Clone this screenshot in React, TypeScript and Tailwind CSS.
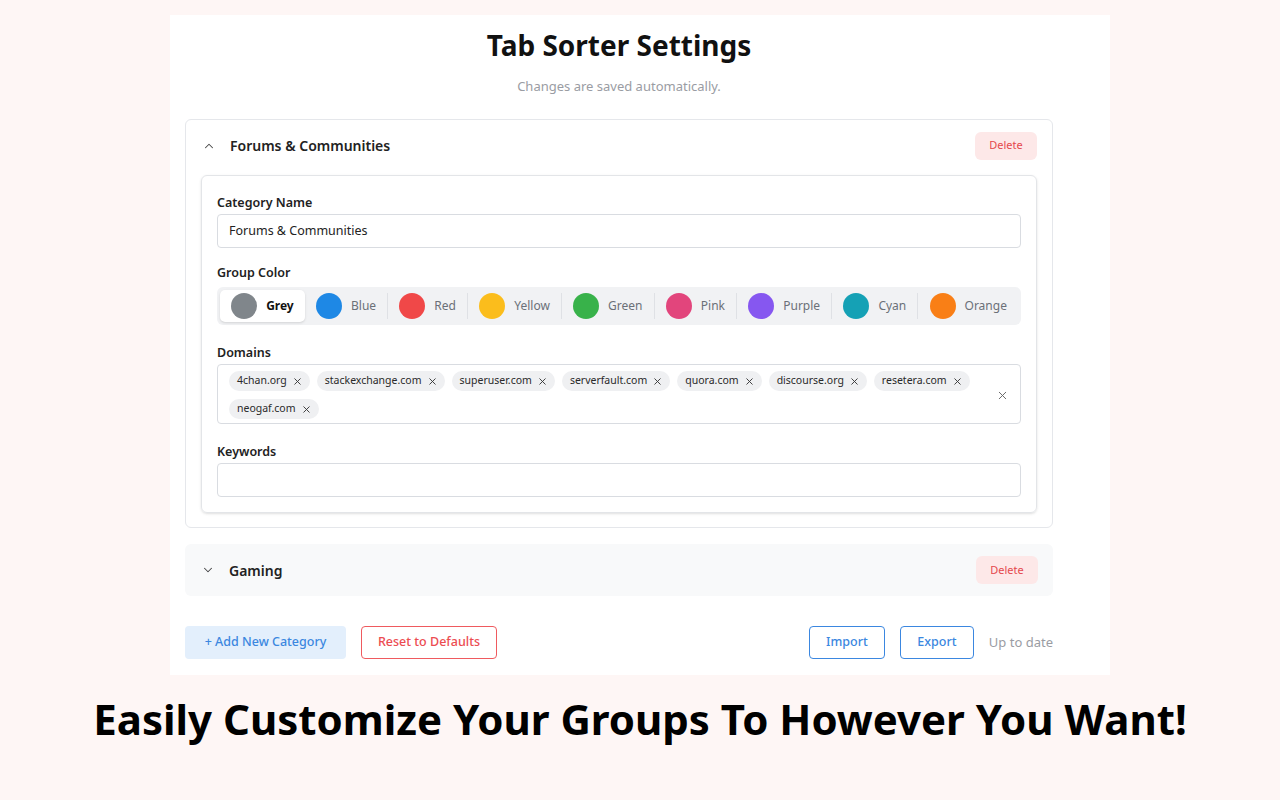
import { ChevronUp, ChevronDown, X } from "lucide-react";

const colors = [
  { name: "Grey", hex: "#80868b" },
  { name: "Blue", hex: "#1e88e5" },
  { name: "Red", hex: "#f04848" },
  { name: "Yellow", hex: "#fbbd1c" },
  { name: "Green", hex: "#38b24a" },
  { name: "Pink", hex: "#e2457c" },
  { name: "Purple", hex: "#8657f0" },
  { name: "Cyan", hex: "#15a1b5" },
  { name: "Orange", hex: "#f97f16" },
];

const domains = [
  "4chan.org",
  "stackexchange.com",
  "superuser.com",
  "serverfault.com",
  "quora.com",
  "discourse.org",
  "resetera.com",
  "neogaf.com",
];

function Label({ children }: { children: React.ReactNode }) {
  return (
    <div className="text-[12.5px] font-semibold text-[#222] leading-[13px] mb-[5px]">
      {children}
    </div>
  );
}

export default function App() {
  const selected = "Grey";

  return (
    <div
      className="w-[1280px] h-[800px] bg-[#fef6f5] flex flex-col items-center pt-[15px] overflow-hidden"
      style={{ fontFamily: '"Noto Sans", "Open Sans", sans-serif' }}
    >
      {/* Settings card */}
      <div className="w-[940px] h-[660px] bg-white pl-[15px] pr-[57px] pt-[13px]">
        <h1 className="text-[28px] font-bold text-[#111] text-center leading-[34px]">
          Tab Sorter Settings
        </h1>
        <p className="text-[13px] text-[#9a9ca3] text-center mt-[15px] leading-[18px]">
          Changes are saved automatically.
        </p>

        {/* Forums & Communities */}
        <div className="mt-[24px] border border-[#e5e7eb] rounded-md px-[15px] pb-[14px]">
          <div className="flex items-center justify-between h-[51px] mb-[4px]">
            <div className="flex items-center gap-[14px] pl-[1px]">
              <ChevronUp className="w-[14px] h-[14px] text-[#444]" strokeWidth={1.75} />
              <span className="text-[14px] font-semibold text-[#222]">
                Forums &amp; Communities
              </span>
            </div>
            <button className="h-[28px] w-[62px] rounded-md bg-[#fde8e8] text-[#e5484d] text-[11px]">
              Delete
            </button>
          </div>

          <div className="border border-[#e3e5e8] rounded-md shadow-sm px-[15px] pt-[20px] pb-[15px]">
            <Label>Category Name</Label>
            <div className="h-[34px] border border-[#d9dce1] rounded-[4px] flex items-center px-[11px] text-[12.5px] text-[#222]">
              Forums &amp; Communities
            </div>

            <div className="mt-[18px]">
              <Label>Group Color</Label>
              <div className="mt-[8px] flex items-center bg-[#f1f2f4] rounded-md p-[3px] h-[38px]">
                {colors.map((c, i) => {
                  const active = c.name === selected;
                  const prevActive = i > 0 && colors[i - 1].name === selected;
                  return (
                    <div key={c.name} className="flex flex-auto items-center h-full">
                      {i > 0 && !active && !prevActive && (
                        <div className="w-px h-[26px] bg-[#dfe1e5]" />
                      )}
                      <div
                        className={`flex flex-auto justify-center items-center gap-[9px] h-full px-[8px] ${
                          active ? "bg-white rounded-[5px] shadow-sm" : ""
                        }`}
                      >
                        <span
                          className="w-[26px] h-[26px] rounded-full shrink-0"
                          style={{ backgroundColor: c.hex }}
                        />
                        <span
                          className={`text-[12px] ${
                            active ? "font-bold text-[#111]" : "text-[#6b7078]"
                          }`}
                        >
                          {c.name}
                        </span>
                      </div>
                    </div>
                  );
                })}
              </div>
            </div>

            <div className="mt-[21px]">
              <Label>Domains</Label>
              <div className="border border-[#d9dce1] rounded-[4px] flex items-center pl-[11px] pr-[11px] pt-[6px] pb-[4px] min-h-[60px]">
                <div className="flex flex-wrap flex-1 gap-x-[7px] gap-y-[8px]">
                  {domains.map((d) => (
                    <span
                      key={d}
                      className="h-[20px] rounded-full bg-[#eff0f2] flex items-center gap-[5px] pl-[8px] pr-[7px] text-[10.5px] text-[#2a2a2a]"
                    >
                      {d}
                      <X className="w-[11px] h-[11px] text-[#333]" strokeWidth={2} />
                    </span>
                  ))}
                </div>
                <X className="w-[13px] h-[13px] text-[#666] ml-2" strokeWidth={1.75} />
              </div>
            </div>

            <div className="mt-[21px]">
              <Label>Keywords</Label>
              <div className="h-[34px] border border-[#d9dce1] rounded-[4px]" />
            </div>
          </div>
        </div>

        {/* Gaming */}
        <div className="mt-[16px] bg-[#f8f9fa] rounded-md px-[15px] h-[52px] flex items-center justify-between">
          <div className="flex items-center gap-[14px] pl-[1px]">
            <ChevronDown className="w-[14px] h-[14px] text-[#444]" strokeWidth={1.75} />
            <span className="text-[14px] font-semibold text-[#222]">Gaming</span>
          </div>
          <button className="h-[28px] w-[62px] rounded-md bg-[#fde8e8] text-[#e5484d] text-[11px]">
            Delete
          </button>
        </div>

        {/* Footer actions */}
        <div className="mt-[30px] flex items-center justify-between">
          <div className="flex items-center gap-[15px]">
            <button className="h-[33px] w-[161px] rounded-[4px] bg-[#e3effc] text-[#3b87e0] text-[12.5px] font-medium">
              + Add New Category
            </button>
            <button className="h-[33px] w-[136px] rounded-[4px] border border-[#ef5a5f] text-[#ec4c51] text-[12.5px] font-medium bg-white">
              Reset to Defaults
            </button>
          </div>
          <div className="flex items-center gap-[15px]">
            <button className="h-[33px] w-[76px] rounded-[4px] border border-[#3b87e0] text-[#3b87e0] text-[12.5px] font-medium bg-white">
              Import
            </button>
            <button className="h-[33px] w-[74px] rounded-[4px] border border-[#3b87e0] text-[#3b87e0] text-[12.5px] font-medium bg-white">
              Export
            </button>
            <span className="text-[13px] text-[#9a9ca3]">Up to date</span>
          </div>
        </div>
      </div>

      {/* Headline */}
      <h2 className="mt-[18px] text-[42px] font-bold text-black leading-[52px]">
        Easily Customize Your Groups To However You Want!
      </h2>
    </div>
  );
}
